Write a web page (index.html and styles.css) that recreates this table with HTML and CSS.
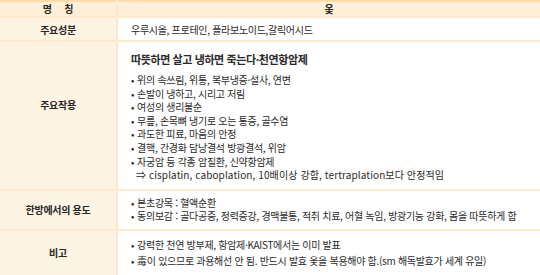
FILE: index.html
```html
<!DOCTYPE html>
<html lang="ko">
<head>
<meta charset="utf-8">
<link rel="stylesheet" href="styles.css">
</head>
<body>
<table class="info">
  <colgroup><col class="c-label"><col class="c-body"></colgroup>
  <thead>
    <tr class="head"><th>명&nbsp;&nbsp;&nbsp;&nbsp;&nbsp;칭</th><th>옻</th></tr>
  </thead>
  <tbody>
    <tr class="r-comp">
      <th>주요성분</th>
      <td>우루시올, 프로테인, 플라보노이드,갈릭어시드</td>
    </tr>
    <tr class="r-act">
      <th>주요작용</th>
      <td>
        <p class="title">따뜻하면 살고 냉하면 죽는다·천연항암제</p>
        <ul class="list">
          <li>위의 속쓰림, 위통, 복부냉증·설사, 연변</li>
          <li>손발이 냉하고, 시리고 저림</li>
          <li>여성의 생리불순</li>
          <li>무릎, 손목뼈 냉기로 오는 통증, 골수염</li>
          <li>과도한 피료, 마음의 안정</li>
          <li>결핵, 간경화 담낭결석 방광결석, 위암</li>
          <li>자궁암 등 각종 암질환, 신약항암제</li>
          <li class="arrow">⇒ cisplatin, caboplation, 10배이상 강함, tertraplation보다 안정적임</li>
        </ul>
      </td>
    </tr>
    <tr class="r-use">
      <th>한방에서의 용도</th>
      <td>
        <ul class="list">
          <li>본초강목 : 혈액순환</li>
          <li>동의보감 : 골다공증, 정력증강, 경맥불통, 적취 치료, 어혈 녹임, 방광기능 강화, 몸을 따뜻하게 함</li>
        </ul>
      </td>
    </tr>
    <tr class="r-note">
      <th>비고</th>
      <td>
        <ul class="list wide">
          <li>강력한 천연 방부제, 항암제·KAIST에서는 이미 발표</li>
          <li>毒이 있으므로 과용해선 안 됨. 반드시 발효 옻을 복용해야 함.(sm 해독발효가 세계 유일)</li>
        </ul>
      </td>
    </tr>
  </tbody>
</table>
</body>
</html>
```
FILE: styles.css
```css
html, body {
  margin: 0;
  padding: 0;
  background: #ffffff;
}
body {
  font-family: "Noto Sans CJK KR", "Noto Sans", sans-serif;
  color: #2a2a2a;
  font-size: 10px;
  letter-spacing: -0.3px;
}
.info {
  width: 540px;
  border-collapse: collapse;
  table-layout: fixed;
  border-top: 2px solid #fbdca6;
  border-bottom: 2px solid #fbe2b8;
}
.c-label { width: 117px; }
.info th, .info td {
  border-bottom: 2px solid #fcebcf;
  padding: 0;
  vertical-align: middle;
}
.info th {
  background: #fef4e4;
  border-right: 2px solid #fce9ca;
  font-weight: bold;
  text-align: center;
  color: #262626;
}
.info td {
  padding-left: 13px;
  text-align: left;
}
.head th {
  background: #fdefd8;
  height: 14px;
  line-height: 14px;
  text-align: center;
  padding: 0;
}
.head th:last-child { border-right: none; }
.r-comp th, .r-comp td { height: 22px; }
.r-act th { padding-bottom: 22px; }
.r-act td { padding-top: 9px; padding-bottom: 7px; }
.title {
  margin: 0 0 6px 0;
  font-weight: bold;
  font-size: 11px;
  letter-spacing: -0.4px;
  line-height: 16px;
}
.list {
  list-style: none;
  margin: 0;
  padding: 0;
}
.list li {
  line-height: 13.6px;
  white-space: nowrap;
}
.list li::before {
  content: "•";
  margin-right: 3px;
}
.list li.arrow { padding-left: 5px; letter-spacing: 0.1px; }
.list li.arrow::before { content: none; }
.r-use td { padding-top: 5px; padding-bottom: 6px; }
.r-note td { padding-top: 6px; padding-bottom: 6px; }
.list.wide li { line-height: 16px; }
```
